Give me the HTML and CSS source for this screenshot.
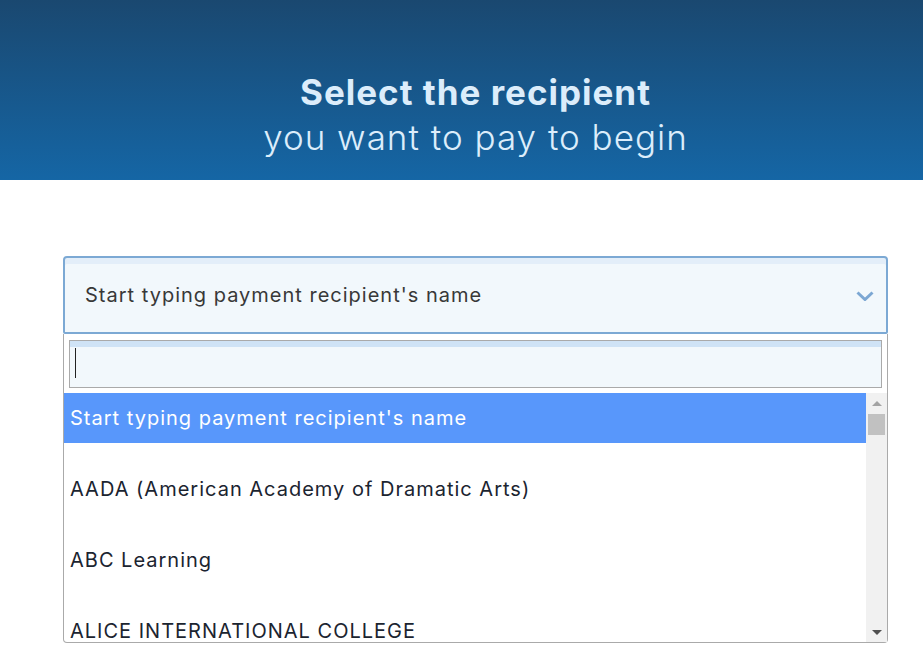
FILE: index.html
```html
<!DOCTYPE html>
<html lang="en">
<head>
    <meta charset="UTF-8">
    <meta name="viewport" content="width=device-width, initial-scale=1.0">
    <title>Select recipient</title>
    <link rel="stylesheet" href="styles.css">
</head>
<body>
    <header class="hero">
        <h1>
            <span class="strong">Select the recipient</span>
            <span class="light">you want to pay to begin</span>
        </h1>
    </header>

    <main class="content">
        <div class="picker">
            <div class="picker-box">
                <span class="picker-text">Start typing payment recipient's name</span>
                <svg class="chevron" width="18" height="10" viewBox="0 0 18 10">
                    <path d="M1.5 1.5 L9 8.5 L16.5 1.5" fill="none" stroke="#7ca7d3" stroke-width="3"/>
                </svg>
            </div>
            <div class="dropdown">
                <div class="search"><span class="caret"></span></div>
                <div class="results">
                    <ul class="options">
                        <li class="option active">Start typing payment recipient's name</li>
                        <li class="option">AADA (American Academy of Dramatic Arts)</li>
                        <li class="option">ABC Learning</li>
                        <li class="option">ALICE INTERNATIONAL COLLEGE</li>
                    </ul>
                    <div class="scrollbar">
                        <div class="sb-btn"><span class="arrow-up"></span></div>
                        <div class="sb-thumb"></div>
                        <div class="sb-track"></div>
                        <div class="sb-btn"><span class="arrow-down"></span></div>
                    </div>
                </div>
            </div>
        </div>
    </main>
</body>
</html>
```

FILE: styles.css
```css
body {
    margin: 0;
    font-family: Inter, "Liberation Sans", sans-serif;
    letter-spacing: 1px;
    background-color: white;
}
.hero {
    height: 180px;
    box-sizing: border-box;
    padding: 70px 0 0 28px;
    background: linear-gradient(to bottom, #1a4870, #1566a5);
    text-align: center;
    color: #dcedfb;
}
.hero h1 {
    margin: 0;
    font-size: 35px;
    line-height: 45px;
    font-weight: 700;
}
.hero span {
    display: block;
}
.hero .light {
    font-weight: 300;
}
.content {
    padding: 76px 0 0 63px;
}
.picker {
    width: 825px;
}
.picker-box {
    display: flex;
    align-items: center;
    justify-content: space-between;
    height: 78px;
    box-sizing: border-box;
    padding: 0 12px 0 20px;
    border: 2px solid #7ca9d4;
    border-radius: 4px 4px 2px 2px;
    background-color: #f2f8fc;
    box-shadow: inset 0 6px 0 #e3eef9;
    font-size: 20px;
    color: #383838;
}
.chevron {
    margin-top: 2px;
}
.dropdown {
    border: 1px solid #aaaaaa;
    border-top: none;
    border-radius: 0 0 4px 4px;
    padding-top: 6px;
}
.search {
    margin: 0 5px;
    height: 48px;
    box-sizing: border-box;
    padding: 7px 5px;
    border: 1px solid #aaaaaa;
    background-color: #f2f8fc;
    box-shadow: inset 0 6px 0 #cfe3f6;
}
.caret {
    display: block;
    width: 1px;
    height: 30px;
    background-color: #222;
}
.results {
    display: flex;
    height: 249px;
    margin-top: 5px;
    overflow: hidden;
}
.options {
    flex: 1;
    margin: 0;
    padding: 0;
    list-style: none;
}
.option {
    padding: 34px 6px 12px;
    font-size: 20px;
    line-height: 25px;
    color: #1b2430;
    white-space: nowrap;
}
.option.active {
    padding: 13px 6px 12px;
    background-color: #5897fb;
    color: white;
}
.scrollbar {
    display: flex;
    flex-direction: column;
    width: 21px;
    background-color: #f1f1f1;
}
.sb-btn {
    display: flex;
    align-items: center;
    justify-content: center;
    height: 20px;
}
.arrow-up, .arrow-down {
    width: 0;
    height: 0;
    border-left: 5px solid transparent;
    border-right: 5px solid transparent;
}
.arrow-up {
    border-bottom: 5px solid #a3a3a3;
}
.arrow-down {
    border-top: 5px solid #505050;
}
.sb-thumb {
    height: 21px;
    margin: 1px 2px 0;
    background-color: #c1c1c1;
}
.sb-track {
    flex: 1;
}
```
